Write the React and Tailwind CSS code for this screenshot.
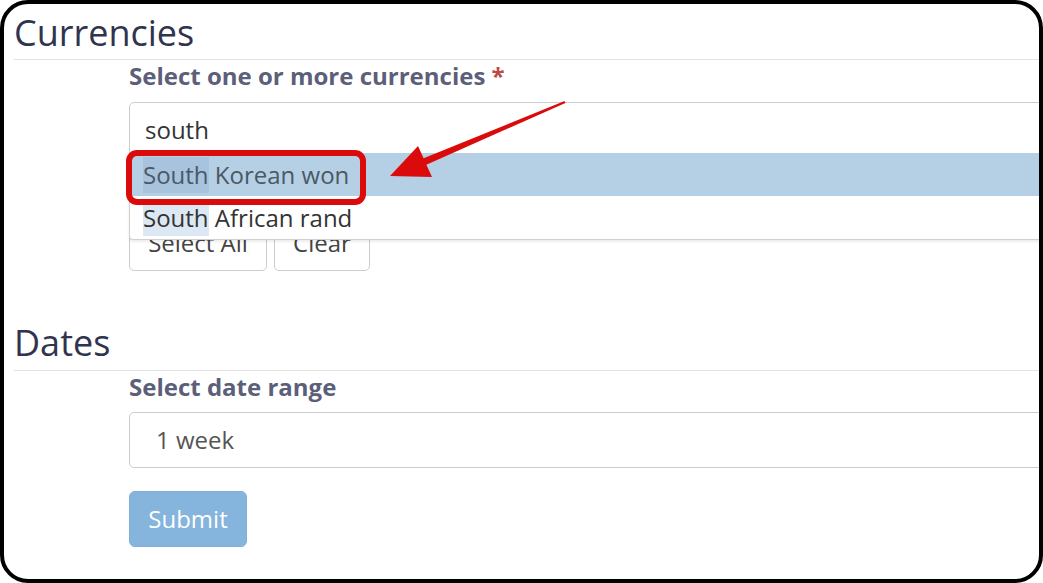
export default function App() {
  const font = { fontFamily: '"Open Sans", "Liberation Sans", sans-serif' }
  return (
    <div className="bg-white w-[1043px] h-[583px]" style={font}>
      <div className="relative w-[1043px] h-[583px] border-[4px] border-black rounded-[28px] overflow-hidden bg-white">
        <div className="pl-[10px] w-[1400px]">
          {/* Currencies */}
          <h3 className="mt-[9px] text-[36px] leading-[40px] text-[#30344f]">Currencies</h3>
          <div className="mt-[6px] border-t border-[#e3e3e3]" />
          <div className="pl-[115px]">
            <label className="block text-[24px] leading-[32px] font-bold text-[#5c5f79]">
              Select one or more currencies <span className="text-[#bd4a47]">*</span>
            </label>
            <div className="relative mt-[10px] w-[1000px]">
              <div className="h-[56px] border border-[#cccccc] rounded-[5px] px-[15px] flex items-center text-[24px] text-[#333]">south</div>
              <div className="absolute left-0 top-[51px] w-full bg-white border border-[#d0d0d0] border-t-0 shadow-[0_2px_3px_rgba(0,0,0,0.08)] rounded-b-[4px] z-10">
                <div className="h-[43px] flex items-center px-[13px] bg-[#b5cfe5] text-[24px] text-[#4b5966]">
                  <span className="bg-[#a8c3dd]">South</span>&nbsp;Korean won
                </div>
                <div className="h-[43px] flex items-center px-[13px] text-[24px] text-[#333]">
                  <span className="bg-[#dce8f4]">South</span>&nbsp;African rand
                </div>
              </div>
            </div>
            <div className="mt-[57px] flex gap-[7px]">
              <button className="h-[56px] w-[138px] border border-[#cccccc] rounded-[5px] text-[24px] text-[#444]">Select All</button>
              <button className="h-[56px] w-[96px] border border-[#cccccc] rounded-[5px] text-[24px] text-[#444]">Clear</button>
            </div>
          </div>

          {/* Dates */}
          <h3 className="mt-[52px] text-[36px] leading-[40px] text-[#30344f]">Dates</h3>
          <div className="mt-[7px] border-t border-[#e3e3e3]" />
          <div className="pl-[115px]">
            <label className="block text-[24px] leading-[32px] font-bold text-[#5c5f79]">Select date range</label>
            <div className="mt-[9px] w-[1000px] h-[56px] border border-[#cccccc] rounded-[5px] pl-[26px] flex items-center text-[24px] text-[#555]">1 week</div>
            <button className="mt-[23px] h-[56px] w-[118px] rounded-[6px] bg-[#85b4dc] border border-[#7eaed8] text-white text-[24px]">Submit</button>
          </div>
        </div>

        {/* annotation */}
        <div className="absolute left-[122px] top-[146px] w-[240px] h-[55px] border-[6px] border-[#dc0b0b] rounded-[11px] z-20" />
        <svg className="absolute -left-[4px] -top-[4px] z-20 pointer-events-none" width="1043" height="583" viewBox="0 0 1043 583">
          <polygon points="564.6,101.1 423.6,158.3 418,146 390,176 432,177 426.4,164.7 565.4,102.9" fill="#dc0b0b" />
        </svg>
      </div>
    </div>
  )
}
